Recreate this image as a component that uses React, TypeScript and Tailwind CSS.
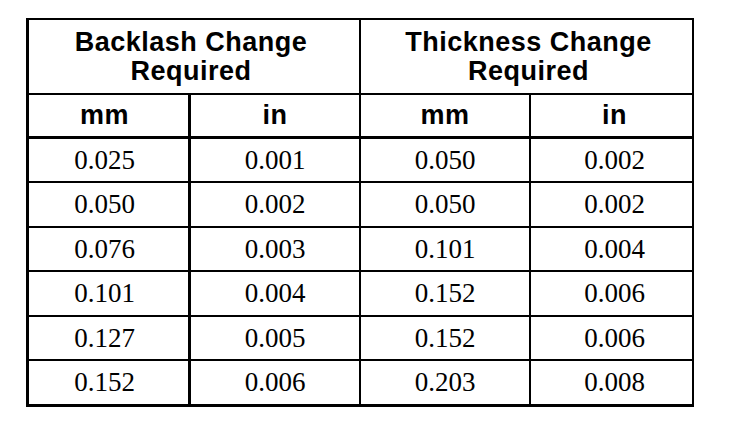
import React from "react";

const rows = [
  ["0.025", "0.001", "0.050", "0.002"],
  ["0.050", "0.002", "0.050", "0.002"],
  ["0.076", "0.003", "0.101", "0.004"],
  ["0.101", "0.004", "0.152", "0.006"],
  ["0.127", "0.005", "0.152", "0.006"],
  ["0.152", "0.006", "0.203", "0.008"],
];
const heights = ["h-[44px]", "h-[45px]", "h-[44px]", "h-[45px]", "h-[44px]", "h-[43px]"];

export default function App() {
  const sans = { fontFamily: '"Liberation Sans", Arial, sans-serif' };
  const serif = { fontFamily: '"Liberation Serif", "Times New Roman", serif' };
  return (
    <div className="w-[736px] h-[426px] bg-white pt-[18px] pl-[26px] text-black">
      <div className="w-[668px] border-l-[3px] border-t-2 border-r-2 border-b-[3px] border-black">
        <div className="flex h-[75px] border-b-2 border-black font-bold text-[27px] leading-[29px] tracking-[0.5px]" style={sans}>
          <div className="w-[332px] border-r-2 border-black flex items-center justify-center text-center pr-[6px]">
            <div>Backlash Change<br />Required</div>
          </div>
          <div className="flex-1 flex items-center justify-center text-center pl-[4px]">
            <div>Thickness Change<br />Required</div>
          </div>
        </div>
        <div className="flex h-[44px] border-b-[3px] border-black font-bold text-[27px] tracking-[0.5px]" style={sans}>
          <div className="w-[162px] border-r-[3px] border-black flex items-center justify-center pr-[8px]">mm</div>
          <div className="w-[170px] border-r-2 border-black flex items-center justify-center">in</div>
          <div className="w-[170px] border-r-2 border-black flex items-center justify-center">mm</div>
          <div className="flex-1 flex items-center justify-center pl-[6px]">in</div>
        </div>
        {rows.map((r, i) => (
          <div
            key={i}
            className={`flex ${heights[i]} ${i < rows.length - 1 ? "border-b-2" : ""} border-black text-[27px]`}
            style={serif}
          >
            <div className="w-[162px] border-r-[3px] border-black flex items-center justify-center pr-[8px]">{r[0]}</div>
            <div className="w-[170px] border-r-2 border-black flex items-center justify-center">{r[1]}</div>
            <div className="w-[170px] border-r-2 border-black flex items-center justify-center">{r[2]}</div>
            <div className="flex-1 flex items-center justify-center pl-[6px]">{r[3]}</div>
          </div>
        ))}
      </div>
    </div>
  );
}
